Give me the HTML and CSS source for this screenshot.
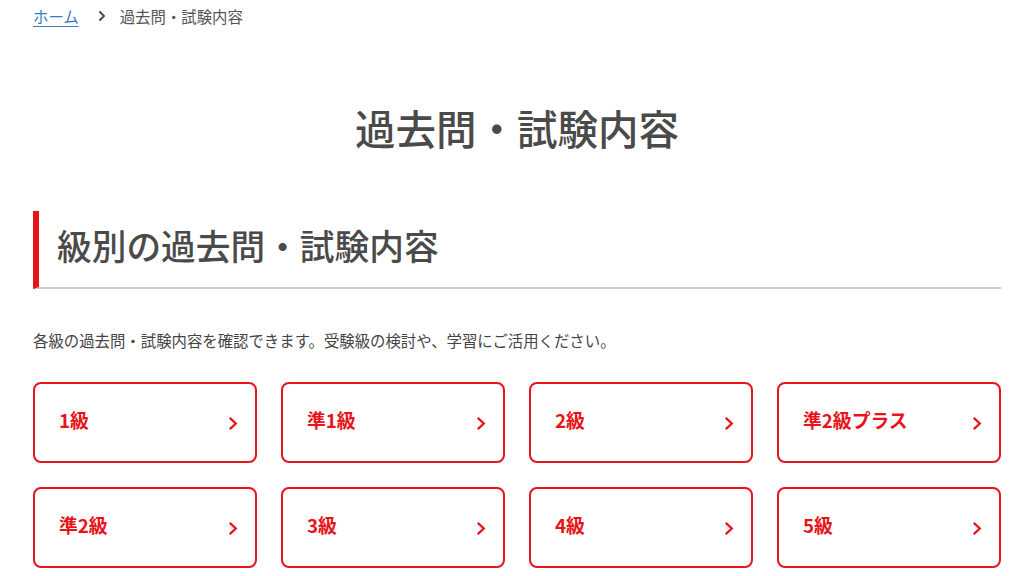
FILE: index.html
```html
<!DOCTYPE html>
<html lang="ja">
<head>
<meta charset="utf-8">
<title>過去問・試験内容</title>
<link rel="stylesheet" href="styles.css">
</head>
<body>
<div class="page">
  <nav class="breadcrumb">
    <a href="#" class="crumb-link">ホーム</a>
    <svg class="crumb-sep" width="8" height="12" viewBox="0 0 8 12"><path d="M1.5 1.5 L6 6 L1.5 10.5" fill="none" stroke="#444" stroke-width="1.8"/></svg>
    <span class="crumb-current">過去問・試験内容</span>
  </nav>
  <h1 class="title">過去問・試験内容</h1>
  <h2 class="section-title">級別の過去問・試験内容</h2>
  <p class="lead">各級の過去問・試験内容を確認できます。受験級の検討や、学習にご活用ください。</p>
  <div class="grade-grid">
    <a href="#" class="grade-btn"><span>1級</span><svg class="chev" width="10" height="15" viewBox="0 0 10 15"><path d="M1.8 1.8 L7.8 7.5 L1.8 13.2" fill="none" stroke="#e8141a" stroke-width="2.3"/></svg></a>
    <a href="#" class="grade-btn"><span>準1級</span><svg class="chev" width="10" height="15" viewBox="0 0 10 15"><path d="M1.8 1.8 L7.8 7.5 L1.8 13.2" fill="none" stroke="#e8141a" stroke-width="2.3"/></svg></a>
    <a href="#" class="grade-btn"><span>2級</span><svg class="chev" width="10" height="15" viewBox="0 0 10 15"><path d="M1.8 1.8 L7.8 7.5 L1.8 13.2" fill="none" stroke="#e8141a" stroke-width="2.3"/></svg></a>
    <a href="#" class="grade-btn"><span>準2級プラス</span><svg class="chev" width="10" height="15" viewBox="0 0 10 15"><path d="M1.8 1.8 L7.8 7.5 L1.8 13.2" fill="none" stroke="#e8141a" stroke-width="2.3"/></svg></a>
    <a href="#" class="grade-btn"><span>準2級</span><svg class="chev" width="10" height="15" viewBox="0 0 10 15"><path d="M1.8 1.8 L7.8 7.5 L1.8 13.2" fill="none" stroke="#e8141a" stroke-width="2.3"/></svg></a>
    <a href="#" class="grade-btn"><span>3級</span><svg class="chev" width="10" height="15" viewBox="0 0 10 15"><path d="M1.8 1.8 L7.8 7.5 L1.8 13.2" fill="none" stroke="#e8141a" stroke-width="2.3"/></svg></a>
    <a href="#" class="grade-btn"><span>4級</span><svg class="chev" width="10" height="15" viewBox="0 0 10 15"><path d="M1.8 1.8 L7.8 7.5 L1.8 13.2" fill="none" stroke="#e8141a" stroke-width="2.3"/></svg></a>
    <a href="#" class="grade-btn"><span>5級</span><svg class="chev" width="10" height="15" viewBox="0 0 10 15"><path d="M1.8 1.8 L7.8 7.5 L1.8 13.2" fill="none" stroke="#e8141a" stroke-width="2.3"/></svg></a>
  </div>
</div>
</body>
</html>
```

FILE: styles.css
```css
html, body {
  margin: 0;
  padding: 0;
  background: #fff;
}
body {
  font-family: "Noto Sans CJK JP", "Noto Sans", sans-serif;
  color: #444;
}
.page {
  padding: 0 23px 0 33px;
}
.breadcrumb {
  display: flex;
  align-items: center;
  padding-top: 5px;
  font-size: 15.4px;
  line-height: 22px;
}
.crumb-link {
  color: #3a7bc8;
  text-decoration: underline;
  text-underline-offset: 3px;
}
.crumb-sep {
  margin: 0 14px 0 19px;
}
.crumb-current {
  color: #555;
}
.title {
  margin: 71px 0 0;
  text-align: center;
  font-size: 40.5px;
  font-weight: 500;
  line-height: 60px;
  color: #4a4a4a;
}
.section-title {
  margin: 53px 0 0;
  padding: 8px 0 16px 18px;
  font-size: 34.7px;
  font-weight: 500;
  line-height: 52px;
  color: #4a4a4a;
  border-left: 6px solid #e8141a;
  border-bottom: 2px solid #cccccc;
}
.lead {
  margin: 39px 0 0;
  font-size: 15.4px;
  line-height: 25px;
  color: #444;
}
.grade-grid {
  margin-top: 29px;
  display: grid;
  grid-template-columns: repeat(4, 1fr);
  gap: 24px 24px;
}
.grade-btn {
  display: flex;
  align-items: center;
  justify-content: space-between;
  height: 81px;
  box-sizing: border-box;
  padding: 0 17px 0 24px;
  border: 2px solid #e8141a;
  border-radius: 8px;
  color: #e8141a;
  text-decoration: none;
  font-size: 18.8px;
  font-weight: 700;
  line-height: 1;
}
.grade-btn span {
  margin-top: -4px;
}
.chev {
  margin-top: 2px;
}
```
